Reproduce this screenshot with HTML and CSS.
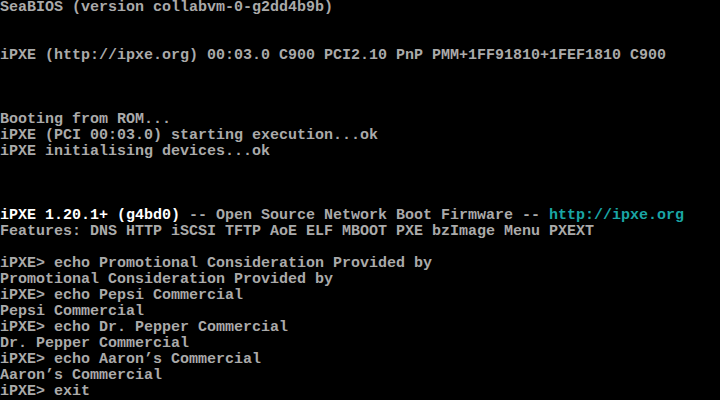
FILE: index.html
```html
<!DOCTYPE html>
<html>
<head>
<meta charset="utf-8">
<link rel="stylesheet" href="styles.css">
</head>
<body>
<pre class="screen">SeaBIOS (version collabvm-0-g2dd4b9b)


iPXE (http://ipxe.org) 00:03.0 C900 PCI2.10 PnP PMM+1FF91810+1FEF1810 C900



Booting from ROM...
iPXE (PCI 00:03.0) starting execution...ok
iPXE initialising devices...ok



<span class="bright">iPXE 1.20.1+ (g4bd0)</span> -- Open Source Network Boot Firmware -- <span class="cyan">http://ipxe.org</span>
Features: DNS HTTP iSCSI TFTP AoE ELF MBOOT PXE bzImage Menu PXEXT

iPXE&gt; echo Promotional Consideration Provided by
Promotional Consideration Provided by
iPXE&gt; echo Pepsi Commercial
Pepsi Commercial
iPXE&gt; echo Dr. Pepper Commercial
Dr. Pepper Commercial
iPXE&gt; echo Aaron’s Commercial
Aaron’s Commercial
iPXE&gt; exit</pre>
</body>
</html>
```
FILE: styles.css
```css
html, body {
  margin: 0;
  padding: 0;
  background: #000;
  width: 720px;
  height: 400px;
  overflow: hidden;
}
.screen {
  margin: 0;
  padding: 0;
  font-family: "Liberation Mono", "DejaVu Sans Mono", monospace;
  font-size: 15px;
  line-height: 16px;
  color: #aaaaaa;
  white-space: pre;
  font-weight: bold;
}
.bright {
  color: #ffffff;
}
.cyan {
  color: #1aa5a5;
}
```
